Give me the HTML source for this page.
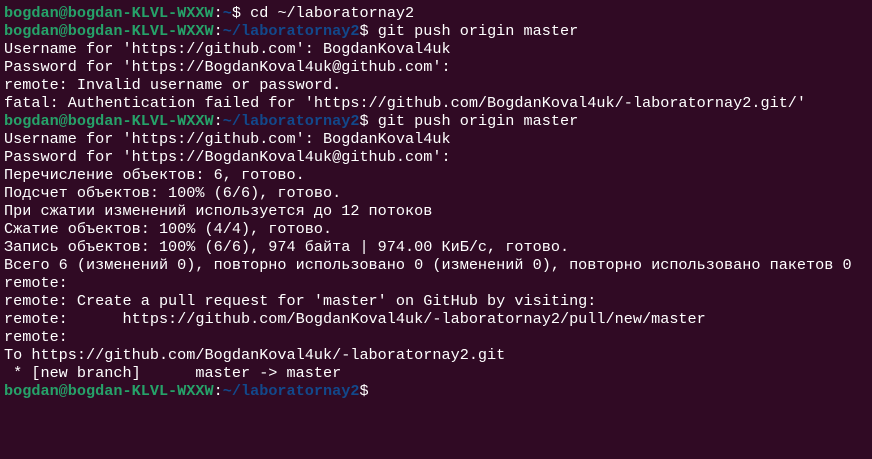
<!DOCTYPE html>
<html><head><meta charset="utf-8"><style>
html,body{margin:0;padding:0;background:#300a24;width:872px;height:459px;overflow:hidden}
pre{margin:0;padding:4px 0 0 4px;font-family:"Liberation Mono","DejaVu Sans Mono",monospace;font-size:15.2px;line-height:18px;color:#ffffff;white-space:pre}
.g{color:#26a269;font-weight:bold}
.b{color:#12488b;font-weight:bold}
</style></head><body><pre><span class="g">bogdan@bogdan-KLVL-WXXW</span>:<span class="b">~</span>$ cd ~/laboratornay2
<span class="g">bogdan@bogdan-KLVL-WXXW</span>:<span class="b">~/laboratornay2</span>$ git push origin master
Username for 'https://github.com': BogdanKoval4uk
Password for 'https://BogdanKoval4uk@github.com': 
remote: Invalid username or password.
fatal: Authentication failed for 'https://github.com/BogdanKoval4uk/-laboratornay2.git/'
<span class="g">bogdan@bogdan-KLVL-WXXW</span>:<span class="b">~/laboratornay2</span>$ git push origin master
Username for 'https://github.com': BogdanKoval4uk
Password for 'https://BogdanKoval4uk@github.com': 
Перечисление объектов: 6, готово.
Подсчет объектов: 100% (6/6), готово.
При сжатии изменений используется до 12 потоков
Сжатие объектов: 100% (4/4), готово.
Запись объектов: 100% (6/6), 974 байта | 974.00 КиБ/с, готово.
Всего 6 (изменений 0), повторно использовано 0 (изменений 0), повторно использовано пакетов 0
remote: 
remote: Create a pull request for 'master' on GitHub by visiting:
remote:      https://github.com/BogdanKoval4uk/-laboratornay2/pull/new/master
remote: 
To https://github.com/BogdanKoval4uk/-laboratornay2.git
 * [new branch]      master -&gt; master
<span class="g">bogdan@bogdan-KLVL-WXXW</span>:<span class="b">~/laboratornay2</span>$ </pre></body></html>
